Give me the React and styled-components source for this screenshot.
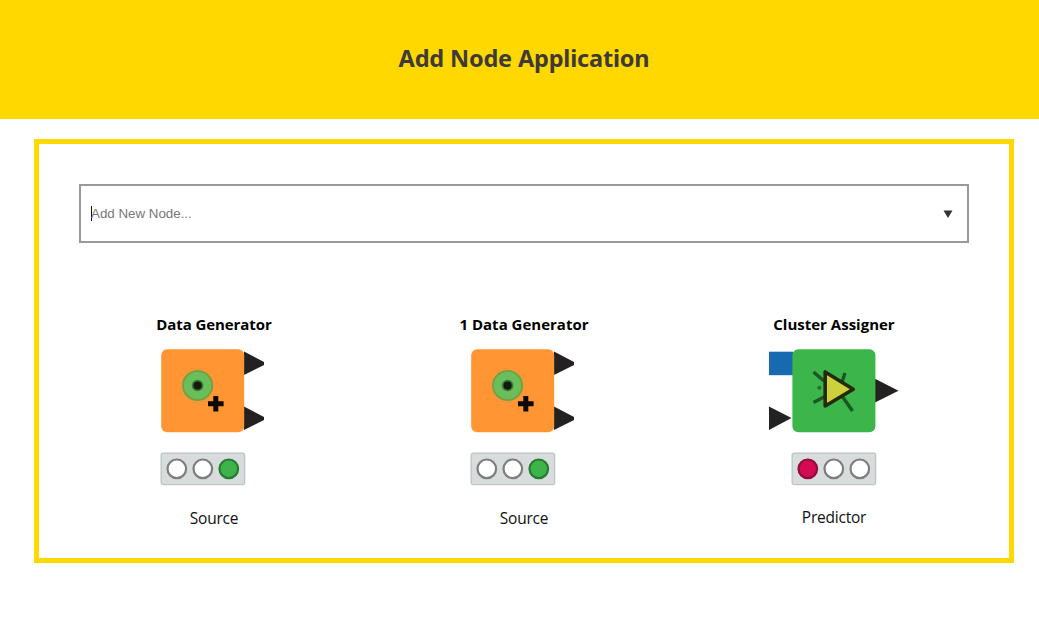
import React from 'react';
import styled, { createGlobalStyle } from 'styled-components';

const GlobalStyle = createGlobalStyle`
  * { box-sizing: border-box; }
  body { margin: 0; background: #fff; font-family: 'Open Sans', 'Noto Sans', sans-serif; }
`;

const Header = styled.header`
  height: 119px;
  padding: 0 0 3px 9px;
  background: #ffd800;
  display: flex;
  align-items: center;
  justify-content: center;
`;

const Title = styled.h1`
  margin: 0;
  font-family: 'Noto Sans', sans-serif;
  font-size: 23.5px;
  line-height: 32px;
  font-weight: 700;
  letter-spacing: -0.17px;
  white-space: nowrap;
  color: #3e3a39;
`;

const Panel = styled.main`
  width: 980px;
  height: 424px;
  margin: 20px 0 0 34px;
  padding: 40px 20px 0;
  border: 5px solid #ffd800;
`;

const Select = styled.div`
  height: 59px;
  margin: 0 20px;
  padding: 0 14px 0 10px;
  border: 2px solid #999;
  display: flex;
  align-items: center;
  justify-content: space-between;
`;

const Placeholder = styled.span`
  height: 15px;
  border-left: 1px solid #111;
  font: 13.33px/15px 'Liberation Sans', Arial, sans-serif;
  color: #777;
  text-indent: -1px;
`;

const Arrow = styled.svg`
  display: block;
  width: 10px;
  height: 8px;
`;

const Nodes = styled.section`
  display: grid;
  grid-template-columns: repeat(3, 310px);
  margin-top: 69px;
`;

const Card = styled.article`
  display: flex;
  flex-direction: column;
  align-items: center;
`;

const NodeName = styled.h2`
  margin: 0;
  height: 33px;
  font-size: 15px;
  line-height: 24px;
  font-weight: 700;
  letter-spacing: ${(p) => p.$spacing}px;
  white-space: nowrap;
  color: #000;
`;

const NodeArt = styled.svg`
  display: block;
  width: 130px;
  height: 145px;
`;

const NodeKind = styled.p`
  margin: ${(p) => p.$gap}px 0 0;
  font-size: 15.5px;
  line-height: 22px;
  font-weight: 400;
  letter-spacing: -0.22px;
  color: #111;
`;

const LIGHTS = {
  off: ['#fff', '#7d7d7d'],
  green: ['#3cb44a', '#287a35'],
  red: ['#d40b52', '#8c1038'],
};

function Lights({ x, states }) {
  return (
    <g transform={`translate(${x} 108)`}>
      <rect x="0.2" y="0.2" width="83.4" height="31.4" rx="2" fill="#d9dcdd" stroke="#c0c6c8" strokeWidth="1.4" />
      {states.map((state, i) => (
        <circle key={i} cx={15.8 + i * 26} cy="15.8" r="9.3" fill={LIGHTS[state][0]} stroke={LIGHTS[state][1]} strokeWidth="2.2" />
      ))}
    </g>
  );
}

function SourceArt() {
  return (
    <NodeArt viewBox="0 0 130 145">
      <path d="M95 6.5 L115 17 V20 L95 30 Z M95 61.5 L115 72 V75 L95 85 Z" fill="#242122" />
      <rect x="12.2" y="4.2" width="83" height="83" rx="6" fill="#ff9633" />
      <circle cx="48.6" cy="40.5" r="14.6" fill="#6abf5c" stroke="#74a243" strokeWidth="2" />
      <circle cx="48.6" cy="40.5" r="5.8" fill="#3b7838" />
      <circle cx="48.6" cy="40.5" r="4.1" fill="#121b10" />
      <path d="M59 58.8 H74.6 M66.8 51 V66.6" stroke="#0d0803" strokeWidth="5" />
      <Lights x={12} states={['off', 'off', 'green']} />
    </NodeArt>
  );
}

function PredictorArt() {
  return (
    <NodeArt viewBox="0 0 130 145">
      <rect x="0" y="6.7" width="24" height="23.5" fill="#1769b0" />
      <path d="M0 61.5 L22.5 73 L0 85 Z M106 33.8 L129.5 45.7 L106 57.5 Z" fill="#242122" />
      <rect x="23.4" y="4.2" width="83" height="83" rx="6" fill="#3cb54a" />
      <path d="M44.5 27 L55 36 M76 28 L73 37 M44.5 57.5 L56 51.5 M73 51 L83.5 66" fill="none" stroke="#1b5725" strokeWidth="3.4" />
      <circle cx="50.3" cy="42.7" r="2" fill="#23742e" />
      <path d="M56.2 27 V61 L84.2 44.2 Z" fill="#cdd13d" stroke="#252a0b" strokeWidth="3.6" strokeLinejoin="round" />
      <Lights x={23} states={['red', 'off', 'off']} />
    </NodeArt>
  );
}

const nodes = [
  { name: 'Data Generator', kind: 'Source', Art: SourceArt, spacing: -0.08, gap: 17 },
  { name: '1 Data Generator', kind: 'Source', Art: SourceArt, spacing: 0, gap: 17 },
  { name: 'Cluster Assigner', kind: 'Predictor', Art: PredictorArt, spacing: 0, gap: 16 },
];

export default function App() {
  return (
    <>
      <GlobalStyle />
      <Header>
        <Title>Add Node Application</Title>
      </Header>
      <Panel>
        <Select>
          <Placeholder>Add New Node...</Placeholder>
          <Arrow viewBox="0 0 10 8">
            <path d="M0.5 0.5 H9.5 L5 8 Z" fill="#333" />
          </Arrow>
        </Select>
        <Nodes>
          {nodes.map(({ name, kind, Art, spacing, gap }) => (
            <Card key={name}>
              <NodeName $spacing={spacing}>{name}</NodeName>
              <Art />
              <NodeKind $gap={gap}>{kind}</NodeKind>
            </Card>
          ))}
        </Nodes>
      </Panel>
    </>
  );
}
